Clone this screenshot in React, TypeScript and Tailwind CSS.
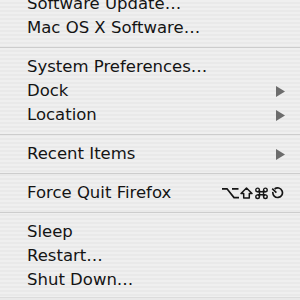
import type { ReactNode } from "react";

type Item = { label: string; submenu?: boolean; shortcut?: boolean } | "sep";

const items: Item[] = [
  { label: "Software Update…" },
  { label: "Mac OS X Software…" },
  "sep",
  { label: "System Preferences…" },
  { label: "Dock", submenu: true },
  { label: "Location", submenu: true },
  "sep",
  { label: "Recent Items", submenu: true },
  "sep",
  { label: "Force Quit Firefox", shortcut: true },
  "sep",
  { label: "Sleep" },
  { label: "Restart…" },
  { label: "Shut Down…" },
];

function Arrow() {
  return (
    <svg width="11" height="11" viewBox="0 0 11 11" className="mr-[1px] text-[#6c6c6c]">
      <path d="M1 0 L10 5.5 L1 11 Z" fill="currentColor" />
    </svg>
  );
}

// option, shift, command, escape
function Shortcut() {
  return (
    <svg width="63" height="13" viewBox="0 0 63 13" fill="none" stroke="#151515" strokeWidth="1.7" className="mr-[2px]">
      <path d="M0 1.8 H5 L12 10.6 H17 M10 1.8 H16.5" />
      <path d="M24.5 1 L30 6.5 H27.3 V11 H21.7 V6.5 H19 Z" strokeWidth="1.5" strokeLinejoin="round" />
      <g strokeWidth="1.4">
        <circle cx="35.6" cy="2.9" r="1.8" />
        <circle cx="43.4" cy="2.9" r="1.8" />
        <circle cx="35.6" cy="9.7" r="1.8" />
        <circle cx="43.4" cy="9.7" r="1.8" />
        <path d="M37.5 2.9 V9.7 M41.5 2.9 V9.7 M35.6 4.8 H43.4 M35.6 7.8 H43.4" />
      </g>
      <path d="M52.6 2 A4.8 4.8 0 1 1 50.9 5" strokeWidth="1.7" />
      <path d="M50.2 1.6 L54.4 5.6" strokeWidth="1.6" />
    </svg>
  );
}

function Row({ children, right }: { children: ReactNode; right?: ReactNode }) {
  return (
    <div className="flex h-6 items-center justify-between pl-[27px] pr-[13px] leading-6">
      <span>{children}</span>
      {right}
    </div>
  );
}

export default function App() {
  return (
    <div
      className="h-[300px] w-[300px] overflow-hidden bg-[repeating-linear-gradient(to_bottom,#efefef_0px,#efefef_2px,#e9e9e9_2px,#e9e9e9_4px)] text-[16.5px] text-[#141414]"
      style={{ fontFamily: '"DejaVu Sans", "Liberation Sans", sans-serif' }}
    >
      <div className="-mt-[8px] border-b border-[#dcdcdc] pb-[5px]">
        {items.map((it, i) =>
          it === "sep" ? (
            <div key={i} className="py-[7px]">
              <div className="h-px bg-[#cdcdcd]" />
            </div>
          ) : (
            <Row
              key={i}
              right={it.submenu ? <Arrow /> : it.shortcut ? <Shortcut /> : undefined}
            >
              {it.label}
            </Row>
          )
        )}
      </div>
    </div>
  );
}
